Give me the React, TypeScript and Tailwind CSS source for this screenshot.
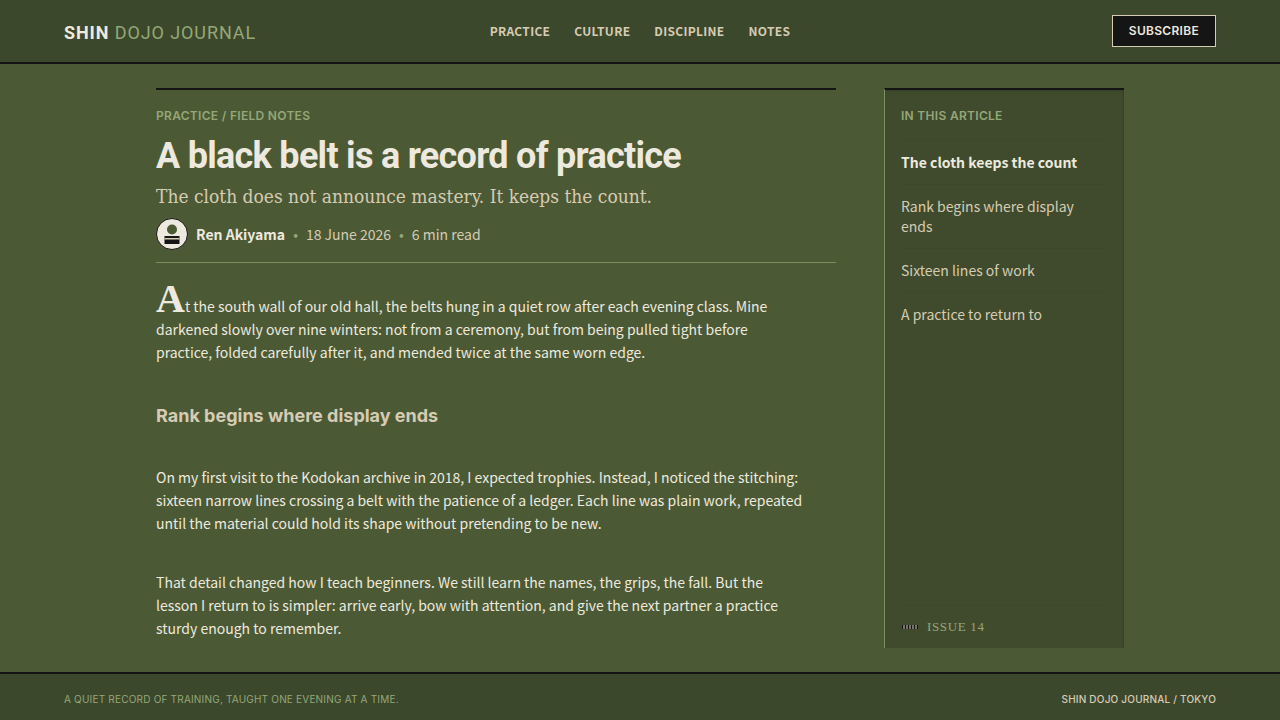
const navItems = ["Practice", "Culture", "Discipline", "Notes"];

const contents = [
  "The cloth keeps the count",
  "Rank begins where display ends",
  "Sixteen lines of work",
  "A practice to return to",
];

function Avatar() {
  return (
    <svg width="32" height="32" viewBox="0 0 32 32" aria-hidden="true">
      <circle cx="16" cy="16" r="15.5" fill="#eee9df" stroke="#151515" />
      <circle cx="16" cy="11.5" r="5" fill="#4b5a35" />
      <rect x="8.5" y="18" width="15" height="8" fill="#151515" />
      <rect x="8.5" y="20" width="15" height="1.5" fill="#d6cbb3" />
    </svg>
  );
}

function Stitches() {
  return (
    <svg width="18" height="6" viewBox="0 0 18 6" aria-hidden="true">
      <rect x="1" y="1" width="16" height="4" fill="#151515" />
      {[2, 5, 8, 11, 14].map((x) => (
        <rect key={x} x={x} y="1" width="2" height="4" fill="#77736a" />
      ))}
    </svg>
  );
}

function Header() {
  return (
    <header className="grid h-16 grid-cols-[1fr_auto_1fr] items-center border-b-2 border-[#151515] bg-[#3c482b] px-16">
      <a href="#" className="pt-1 font-['Roboto',sans-serif] text-lg tracking-wider text-[#95a778]">
        <strong className="font-bold text-[#eee9df]">SHIN</strong> DOJO JOURNAL
      </a>
      <nav className="flex gap-6 text-xs font-bold tracking-wide text-[#d6cbb3] uppercase">
        {navItems.map((item) => (
          <a key={item} href="#">
            {item}
          </a>
        ))}
      </nav>
      <button className="h-8 justify-self-end border border-[#d6cbb3] bg-[#151515] px-4 font-['Inter',sans-serif] text-xs font-semibold tracking-wide text-[#eee9df]">
        SUBSCRIBE
      </button>
    </header>
  );
}

function Article() {
  return (
    <article className="min-w-0 flex-1 border-t-2 border-[#151515] pt-4">
      <p className="font-['Inter',sans-serif] text-xs leading-5 font-semibold tracking-wide text-[#95a778]">
        PRACTICE / FIELD NOTES
      </p>
      <h1 className="mt-2 font-['Roboto',sans-serif] text-4xl leading-11 font-bold tracking-[-0.02em] text-[#eee9df]">
        A black belt is a record of practice
      </h1>
      <p className="mt-1 font-['DejaVu_Serif_Condensed','DejaVu_Serif',serif] text-[19px] leading-7 text-[#d6cbb3]">
        The cloth does not announce mastery. It keeps the count.
      </p>
      <div className="mt-2 flex items-center gap-2 border-b border-[#7b905c] pb-3 text-[#d6cbb3]">
        <Avatar />
        <span className="font-bold text-[#eee9df]">Ren Akiyama</span>
        <span className="text-[#95a778]">•</span>
        <time dateTime="2026-06-18">18 June 2026</time>
        <span className="text-[#95a778]">•</span>
        <span>6 min read</span>
      </div>
      <div className="max-w-[648px] leading-[23px] text-[#eee9df]">
        <p className="mt-8">
          <span className="font-['Liberation_Serif',serif] text-[40px] leading-[0] font-bold">A</span>t the south wall of our
          old hall, the belts hung in a quiet row after each evening class. Mine darkened slowly over nine winters: not
          from a ceremony, but from being pulled tight before practice, folded carefully after it, and mended twice at the
          same worn edge.
        </p>
        <h2 className="mt-10 font-['Inter',sans-serif] text-lg leading-6 font-bold text-[#d6cbb3]">
          Rank begins where display ends
        </h2>
        <p className="mt-[38px]">
          On my first visit to the Kodokan archive in 2018, I expected trophies. Instead, I noticed the stitching: sixteen
          narrow lines crossing a belt with the patience of a ledger. Each line was plain work, repeated until the
          material could hold its shape without pretending to be new.
        </p>
        <p className="mt-9">
          That detail changed how I teach beginners. We still learn the names, the grips, the fall. But the lesson I
          return to is simpler: arrive early, bow with attention, and give the next partner a practice sturdy enough to
          remember.
        </p>
      </div>
    </article>
  );
}

function Sidebar() {
  return (
    <aside className="flex w-60 flex-col border-t-2 border-l border-t-[#151515] border-l-[#7b905c] bg-[#404b2d] px-4 pt-4 shadow-[inset_-1px_1px_2px_#35402a]">
      <h2 className="font-['Inter',sans-serif] text-xs leading-5 font-semibold tracking-wide text-[#95a778]">
        IN THIS ARTICLE
      </h2>
      <nav className="mt-[14px] leading-5 text-[#d6cbb3]">
        {contents.map((title, i) => (
          <a
            key={title}
            href="#"
            className={`block border-t border-[#3c482b] pt-[11px] pb-3 ${i === 0 ? "font-bold text-[#eee9df]" : ""}`}
          >
            {title}
          </a>
        ))}
      </nav>
      <div className="mt-auto flex items-center gap-2 border-t border-[#3c482b] py-3 font-['Liberation_Serif',serif] text-[13px] leading-[18px] tracking-wider text-[#95a778]">
        <Stitches />
        ISSUE 14
      </div>
    </aside>
  );
}

export default function App() {
  return (
    <div className="flex min-h-screen flex-col bg-[#4b5a35] font-['Noto_Sans_CJK_JP',sans-serif] text-sm">
      <Header />
      <main className="mx-auto flex w-full max-w-[1016px] flex-1 gap-12 p-6">
        <Article />
        <Sidebar />
      </main>
      <footer className="flex h-12 items-center justify-between border-t-2 border-[#151515] bg-[#3c482b] px-16 pt-1 font-['Inter',sans-serif] text-[10px] tracking-[0.02em]">
        <p className="text-[#95a778]">A QUIET RECORD OF TRAINING, TAUGHT ONE EVENING AT A TIME.</p>
        <p className="font-medium text-[#d6cbb3]">SHIN DOJO JOURNAL / TOKYO</p>
      </footer>
    </div>
  );
}
